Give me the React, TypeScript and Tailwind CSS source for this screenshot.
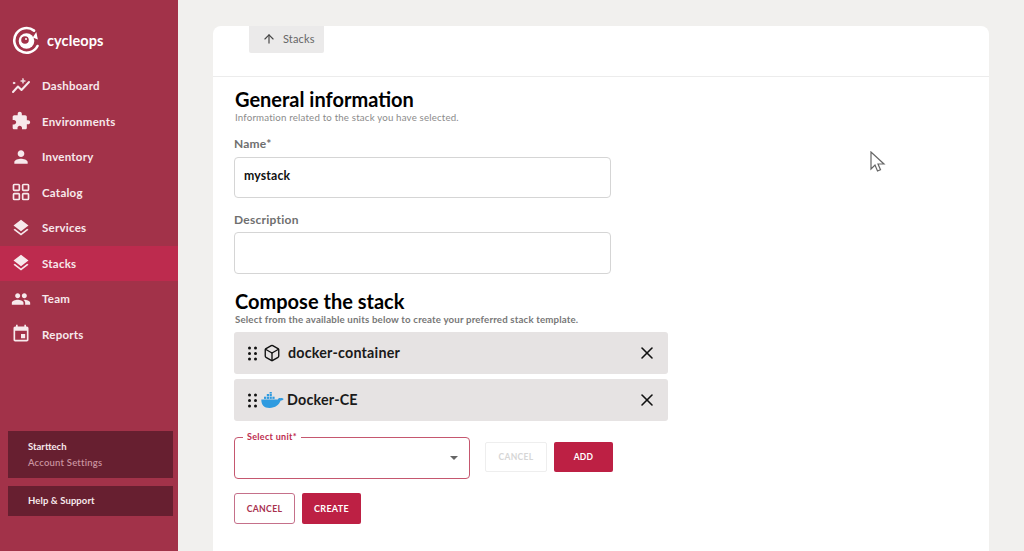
import React from "react";
import { ArrowUp, X, Box, LayoutGrid } from "lucide-react";

const font = { fontFamily: "Lato, 'Noto Sans', sans-serif" };

function Dashboard() {
  return (
    <svg width="20" height="20" viewBox="0 0 20 20" fill="none" stroke="currentColor" strokeWidth="2" strokeLinecap="round" strokeLinejoin="round">
      <path d="M2 16l5-5.500 3.500 3.500 7.500-8" />
      <circle cx="3" cy="7" r="0.8" fill="currentColor" strokeWidth="1" />
      <path d="M12 2.500l.6 1.900 1.900.6-1.900.6-.6 1.900-.6-1.900-1.900-.6 1.900-.6z" fill="currentColor" strokeWidth="0.6" />
    </svg>
  );
}
function Puzzle() {
  return (
    <svg width="20" height="20" viewBox="0 0 24 24" fill="currentColor">
      <path d="M20.500 11H19V7c0-1.100-.9-2-2-2h-4V3.500C13 2.120 11.880 1 10.500 1S8 2.120 8 3.500V5H4c-1.100 0-2 .9-2 2v3.800h1.500c1.490 0 2.700 1.210 2.700 2.700s-1.210 2.700-2.700 2.700H2V20c0 1.100.9 2 2 2h3.800v-1.500c0-1.490 1.210-2.700 2.700-2.700s2.700 1.210 2.700 2.700V22H17c1.100 0 2-.9 2-2v-4h1.500c1.380 0 2.500-1.120 2.500-2.500S21.880 11 20.500 11z" />
    </svg>
  );
}
function Person() {
  return (
    <svg width="20" height="20" viewBox="0 0 24 24" fill="currentColor">
      <path d="M12 12c2.210 0 4-1.790 4-4s-1.790-4-4-4-4 1.790-4 4 1.790 4 4 4zm0 2c-2.670 0-8 1.340-8 4v2h16v-2c0-2.660-5.330-4-8-4z" />
    </svg>
  );
}
function Layers() {
  return (
    <svg width="20" height="20" viewBox="0 0 24 24" fill="currentColor">
      <path d="M11.990 18.540l-7.370-5.730L3 14.070l9 7 9-7-1.630-1.270-7.380 5.740zM12 16l7.360-5.730L21 9l-9-7-9 7 1.630 1.270L12 16z" />
    </svg>
  );
}
function Group() {
  return (
    <svg width="20" height="20" viewBox="0 0 24 24" fill="currentColor">
      <path d="M16 11c1.660 0 2.990-1.340 2.990-3S17.660 5 16 5s-3 1.340-3 3 1.340 3 3 3zm-8 0c1.660 0 2.990-1.340 2.990-3S9.660 5 8 5 5 6.340 5 8s1.340 3 3 3zm0 2c-2.330 0-7 1.170-7 3.500V19h14v-2.500c0-2.330-4.670-3.500-7-3.500zm8 0c-.29 0-.62.020-.97.050 1.160.84 1.970 1.970 1.970 3.450V19h6v-2.500c0-2.330-4.670-3.500-7-3.500z" />
    </svg>
  );
}
function Event() {
  return (
    <svg width="20" height="20" viewBox="0 0 24 24" fill="currentColor">
      <path d="M17 12h-5v5h5v-5zM16 1v2H8V1H6v2H5c-1.110 0-1.990.9-1.990 2L3 19c0 1.100.89 2 2 2h14c1.100 0 2-.9 2-2V5c0-1.100-.9-2-2-2h-1V1h-2zm3 18H5V8h14v11z" />
    </svg>
  );
}
function Logo() {
  return (
    <svg width="30" height="30" viewBox="0 0 30 30" fill="none">
      <path d="M25.500 20A12.300 12.300 0 1 1 22 4.600" stroke="white" strokeWidth="2.600" strokeLinecap="round" />
      <path d="M23 6.500l4 6.500h-5.500z" fill="white" transform="rotate(20 25 10)" />
      <circle cx="14.500" cy="15" r="7.800" fill="white" />
      <circle cx="13" cy="14" r="3.800" fill="#a23249" />
      <circle cx="14" cy="13" r="1" fill="white" />
    </svg>
  );
}
function DockerIcon() {
  return (
    <svg width="23" height="16" viewBox="0 0 23 16" fill="#2f9be0">
      <path d="M0.300 7.500h16.500c.7-1.200 1.900-1.700 2.500-1.200.9-.5 2.400-.3 3.400.7-.8 1.200-2 1.600-3 1.600C18 13 14.500 16 8.500 16 3 16 .2 12.500.300 7.500z" />
      <rect x="3" y="4.700" width="2.200" height="2.200" />
      <rect x="5.800" y="4.700" width="2.200" height="2.200" />
      <rect x="8.600" y="4.700" width="2.200" height="2.200" />
      <rect x="11.400" y="4.700" width="2.200" height="2.200" />
      <rect x="5.800" y="2" width="2.200" height="2.200" />
      <rect x="8.600" y="2" width="2.200" height="2.200" />
      <rect x="8.600" y="0" width="2.200" height="1.600" />
    </svg>
  );
}

const nav: [string, React.ReactNode, boolean?][] = [
  ["Dashboard", <Dashboard />],
  ["Environments", <Puzzle />],
  ["Inventory", <Person />],
  ["Catalog", <LayoutGrid size={20} strokeWidth={2} />],
  ["Services", <Layers />],
  ["Stacks", <Layers />, true],
  ["Team", <Group />],
  ["Reports", <Event />],
];

function Row({ icon, label, className }: { icon: React.ReactNode; label: string; className: string }) {
  return (
    <div className="flex items-center h-[42px] rounded-[3px] bg-[#e6e3e3] pl-[13px] pr-[11px]">
      <svg width="11" height="15" viewBox="0 0 11 15" fill="#111" className="shrink-0">
        <circle cx="2.500" cy="2" r="1.500" /><circle cx="8.500" cy="2" r="1.500" />
        <circle cx="2.500" cy="7.500" r="1.500" /><circle cx="8.500" cy="7.500" r="1.500" />
        <circle cx="2.500" cy="13" r="1.500" /><circle cx="8.500" cy="13" r="1.500" />
      </svg>
      <div className={className}>{icon}</div>
      <span className="text-[14.300px] font-bold text-[#1a1a1a] tracking-[0.2px]">{label}</span>
      <X size={20} strokeWidth={1.9} className="ml-auto text-[#111]" />
    </div>
  );
}

export default function App() {
  return (
    <div className="flex h-[551px] w-[1024px] overflow-hidden bg-[#f1f0ee]" style={font}>
      <aside className="flex flex-col w-[178px] shrink-0 bg-[#a23249] text-[#f7e9ec]">
        <div className="flex items-center gap-[5px] h-[68px] pl-[12px] pt-[13px]">
          <Logo />
          <span className="text-[14.500px] font-bold text-white tracking-[0.1px]">cycleops</span>
        </div>
        <nav className="flex flex-col">
          {nav.map(([label, icon, active]) => (
            <div key={label} className={`flex items-center h-[35.500px] pl-[11px] ${active ? "bg-[#bd2b4e]" : ""}`}>
              <div className="flex items-center w-[31px]">{icon}</div>
              <span className="text-[11.500px] font-bold tracking-[0.25px]">{label}</span>
            </div>
          ))}
        </nav>
        <div className="mt-auto flex flex-col gap-[8px] px-[8px] pb-[35px]">
          <div className="flex flex-col justify-center gap-[3px] h-[47px] bg-[#671f30] pl-[20px] w-[165px]">
            <span className="text-[9.500px] font-bold leading-[13px]">Starttech</span>
            <span className="text-[9.500px] font-semibold leading-[13px] text-[#c9929f] tracking-[0.2px]">Account Settings</span>
          </div>
          <div className="flex items-center h-[30px] bg-[#671f30] pl-[20px] w-[165px]">
            <span className="text-[9.500px] font-bold tracking-[0.1px]">Help &amp; Support</span>
          </div>
        </div>
      </aside>
      <main className="flex-1 pl-[35px] pr-[35px] pt-[26px]">
        <div className="relative h-[540px] rounded-t-[8px] bg-white">
          <div className="h-[51px] border-b border-[#ececec] pl-[36px]">
            <div className="flex items-center gap-[7px] w-[75px] h-[27px] rounded-b-[2px] bg-[#ebeaea] pl-[13px] pb-px text-[#666]">
              <ArrowUp size={14} strokeWidth={2} className="text-[#444]" />
              <span className="text-[11px] tracking-[0.15px]">Stacks</span>
            </div>
          </div>
          <div className="flex flex-col pl-[21px] w-[500px]">
            <h2 className="mt-[10px] pl-px text-[20px] leading-[24px] font-bold text-black">General information</h2>
            <p className="mt-px pl-px text-[9.700px] leading-[11px] text-[#8b8b8b] tracking-[0.18px] whitespace-nowrap">Information related to the stack you have selected.</p>
            <label className="mt-[13px] text-[12px] leading-[15px] font-bold text-[#6f6f6f] tracking-[0.2px]">Name*</label>
            <div className="flex items-center mt-[6px] h-[41px] w-[377px] rounded-[4px] border border-[#d5d5d5] pl-[9px] pb-[2px]">
              <span className="text-[12.300px] font-bold text-[#111] tracking-[0.15px]">mystack</span>
            </div>
            <label className="mt-[14px] text-[12px] leading-[15px] font-bold text-[#6f6f6f] tracking-[0.25px]">Description</label>
            <div className="mt-[5px] h-[42px] w-[377px] rounded-[4px] border border-[#d5d5d5]" />
            <h2 className="mt-[15px] pl-px text-[20px] leading-[24px] font-bold text-black">Compose the stack</h2>
            <p className="pl-px text-[9.700px] leading-[12px] font-bold text-[#777] tracking-[0.16px] whitespace-nowrap">Select from the available units below to create your preferred stack template.</p>
            <div className="flex flex-col gap-[5px] mt-[7px] w-[434px]">
              <Row label="docker-container" className="ml-[5px] mr-[7px] text-[#111]" icon={<Box size={18} strokeWidth={1.8} />} />
              <Row label="Docker-CE" className="ml-[3px] mr-[3px]" icon={<DockerIcon />} />
            </div>
            <div className="flex items-start mt-[16px]">
              <div className="relative flex items-center justify-end w-[236px] h-[42px] rounded-[4px] border border-[#c5576f] pr-[11px]">
                <span className="absolute -top-[7px] left-[8px] bg-white px-[4px] text-[9px] leading-[11px] font-bold text-[#bd2b4e] tracking-[0.3px]">Select unit*</span>
                <span className="w-0 h-0 border-x-[4px] border-x-transparent border-t-[4px] border-t-[#666]" />
              </div>
              <button className="mt-[5px] ml-[15px] w-[62px] h-[30px] rounded-[2px] border border-[#eeeeee] text-[8.500px] font-bold text-[#d6d6d6] tracking-[0.3px]">CANCEL</button>
              <button className="mt-[5px] ml-[7px] w-[59px] h-[30px] rounded-[2px] bg-[#bd2044] text-[8.500px] font-bold text-white tracking-[0.3px]">ADD</button>
            </div>
            <div className="flex items-center gap-[7px] mt-[14px]">
              <button className="w-[61px] h-[31px] rounded-[3px] border border-[#c5708a] text-[8.700px] font-bold text-[#a8304e] tracking-[0.3px]">CANCEL</button>
              <button className="w-[59px] h-[31px] rounded-[2px] bg-[#bd2044] text-[9px] font-bold text-white tracking-[0.3px]">CREATE</button>
            </div>
          </div>
          <svg width="16" height="23" viewBox="0 0 16 23" className="absolute left-[657px] top-[125px]" fill="white" stroke="#666" strokeWidth="1.200">
            <path d="M1 1v17l4-4 2.500 6 3-1.300-2.500-5.700h6z" />
          </svg>
        </div>
      </main>
    </div>
  );
}
